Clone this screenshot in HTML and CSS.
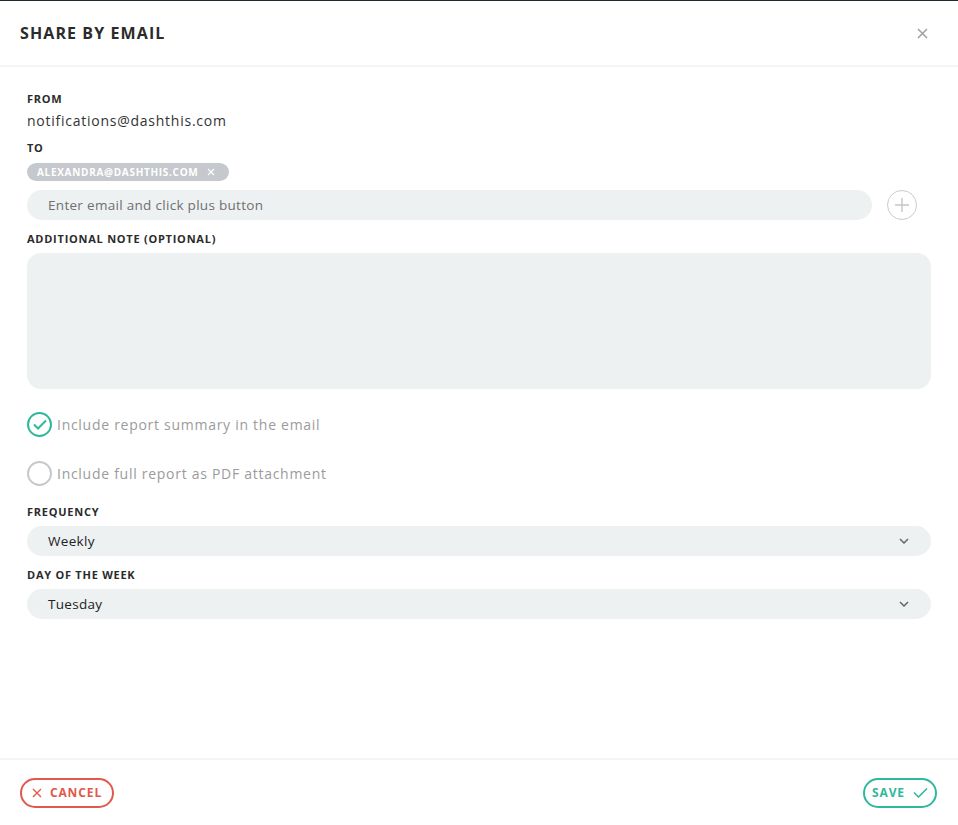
FILE: index.html
```html
<!DOCTYPE html>
<html lang="en">
<head>
    <meta charset="UTF-8">
    <meta name="viewport" content="width=device-width, initial-scale=1.0">
    <title>Share by email</title>
    <link rel="stylesheet" href="styles.css">
</head>
<body>
    <div class="modal">
        <div class="modal-header">
            <h1>Share by email</h1>
            <button class="close" aria-label="Close">
                <svg width="11" height="11" viewBox="0 0 11 11"><path d="M1 1L10 10M10 1L1 10" stroke="#9aa0a6" stroke-width="1.5" fill="none"/></svg>
            </button>
        </div>

        <div class="modal-body">
            <div class="label">From</div>
            <div class="from">notifications@dashthis.com</div>

            <div class="label to-label">To</div>
            <div class="chips">
                <span class="chip">alexandra@dashthis.com
                    <svg width="8" height="8" viewBox="0 0 8 8"><path d="M1 1L7 7M7 1L1 7" stroke="#fff" stroke-width="1.2" fill="none"/></svg>
                </span>
            </div>
            <div class="add-row">
                <input class="field" type="text" placeholder="Enter email and click plus button">
                <button class="plus" aria-label="Add">
                    <svg width="14" height="14" viewBox="0 0 14 14"><path d="M7 0V14M0 7H14" stroke="#c3c5c9" stroke-width="1.4" fill="none"/></svg>
                </button>
            </div>

            <div class="label">Additional note (optional)</div>
            <textarea class="note"></textarea>

            <div class="options">
                <label class="option">
                    <span class="radio checked">
                        <svg width="14" height="11" viewBox="0 0 14 11"><path d="M1 5.5L5 9.5L13 1.5" stroke="#2fb89a" stroke-width="2" fill="none"/></svg>
                    </span>
                    Include report summary in the email
                </label>
                <label class="option">
                    <span class="radio"></span>
                    Include full report as PDF attachment
                </label>
            </div>

            <div class="label">Frequency</div>
            <div class="select">
                Weekly
                <svg width="10" height="6" viewBox="0 0 10 6"><path d="M1 1L5 5L9 1" stroke="#666" stroke-width="1.5" fill="none"/></svg>
            </div>

            <div class="label">Day of the week</div>
            <div class="select">
                Tuesday
                <svg width="10" height="6" viewBox="0 0 10 6"><path d="M1 1L5 5L9 1" stroke="#666" stroke-width="1.5" fill="none"/></svg>
            </div>
        </div>

        <div class="modal-footer">
            <button class="btn cancel">
                <svg width="10" height="10" viewBox="0 0 10 10"><path d="M1 1L9 9M9 1L1 9" stroke="#e0594b" stroke-width="1.4" fill="none"/></svg>
                Cancel
            </button>
            <button class="btn save">
                Save
                <svg width="15" height="11" viewBox="0 0 15 11"><path d="M1 5.5L5.5 10L14 1.5" stroke="#2fb89a" stroke-width="1.6" fill="none"/></svg>
            </button>
        </div>
    </div>
</body>
</html>
```

FILE: styles.css
```css
body {
    margin: 0;
    background-color: #1f2b33;
    font-family: "Open Sans", Arial, sans-serif;
    color: #333;
}
.modal {
    margin-top: 1px;
    height: 824px;
    background: white;
    display: flex;
    flex-direction: column;
}
.modal-header {
    height: 66px;
    display: flex;
    align-items: center;
    justify-content: space-between;
    padding: 0 30px 0 20px;
    border-bottom: 2px solid #f4f5f6;
    box-sizing: border-box;
}
h1 {
    margin: 0;
    font-size: 16px;
    font-weight: 700;
    letter-spacing: 1.1px;
    text-transform: uppercase;
    color: #2b2b2b;
}
.close {
    border: none;
    background: none;
    padding: 0;
    display: flex;
}
.modal-body {
    flex: 1;
    padding: 25px 27px 0 27px;
}
.label {
    font-size: 11px;
    font-weight: 700;
    letter-spacing: 0.75px;
    text-transform: uppercase;
    color: #2b2b2b;
    line-height: 14px;
}
.from {
    font-size: 14px;
    line-height: 20px;
    margin: 5px 0 10px;
    letter-spacing: 0.75px;
}
.chips {
    display: flex;
    margin: 8px 0 9px;
}
.chip {
    display: inline-flex;
    align-items: center;
    gap: 9px;
    height: 18px;
    padding: 0 14px 0 10px;
    border-radius: 9px;
    background-color: #c5c8cc;
    color: white;
    font-size: 10px;
    font-weight: 700;
    letter-spacing: 0.7px;
    text-transform: uppercase;
}
.add-row {
    display: flex;
    align-items: center;
    gap: 15px;
    padding-right: 14px;
    margin-bottom: 12px;
}
.field {
    flex: 1;
    height: 30px;
    border: none;
    border-radius: 15px;
    background-color: #eef1f2;
    padding: 0 21px;
    font-family: inherit;
    font-size: 13.5px;
    letter-spacing: 0.3px;
    outline: none;
}
.field::placeholder {
    color: #6f6f6f;
}
.plus {
    width: 30px;
    height: 30px;
    border: 1.5px solid #c9cbcf;
    border-radius: 50%;
    background: white;
    display: flex;
    align-items: center;
    justify-content: center;
    padding: 0;
}
.note {
    display: block;
    width: 100%;
    box-sizing: border-box;
    height: 136px;
    margin-top: 7px;
    border: none;
    border-radius: 14px;
    background-color: #eef1f2;
    resize: none;
}
.options {
    padding: 23px 0 19px;
    display: flex;
    flex-direction: column;
    gap: 24px;
}
.option {
    display: flex;
    align-items: center;
    gap: 5px;
    font-size: 14px;
    color: #9b9b9b;
    letter-spacing: 0.72px;
}
.radio {
    width: 21px;
    height: 21px;
    border: 2px solid #c6c8cb;
    border-radius: 50%;
    display: flex;
    align-items: center;
    justify-content: center;
}
.radio.checked {
    border-color: #2fb89a;
}
.select {
    display: flex;
    align-items: center;
    justify-content: space-between;
    height: 30px;
    margin: 7px 0 12px;
    padding: 0 22px 0 21px;
    border-radius: 15px;
    background-color: #eef1f2;
    font-size: 13.5px;
    letter-spacing: 0.3px;
    color: #222;
}
.modal-footer {
    height: 67px;
    display: flex;
    align-items: center;
    justify-content: space-between;
    padding: 0 21px 0 20px;
    border-top: 2px solid #f4f5f6;
    box-sizing: border-box;
}
.btn {
    display: flex;
    align-items: center;
    gap: 8px;
    height: 30px;
    padding: 0;
    border-radius: 15px;
    background: white;
    font-family: inherit;
    font-size: 12px;
    font-weight: 700;
    letter-spacing: 0.9px;
    text-transform: uppercase;
}
.btn svg {
    flex-shrink: 0;
}
.cancel {
    border: 2px solid #e0594b;
    color: #e0594b;
    width: 94px;
    justify-content: center;
}
.save {
    border: 2px solid #2fb89a;
    color: #2fb89a;
    width: 74px;
    justify-content: center;
}
```
